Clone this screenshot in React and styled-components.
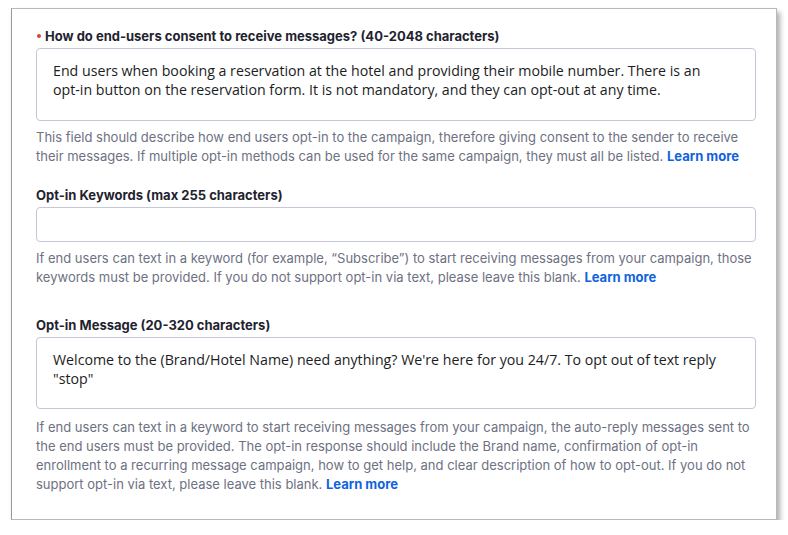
import styled, { createGlobalStyle } from "styled-components"

const Global = createGlobalStyle`
  body {
    margin: 0;
    background: #ffffff;
    font-family: Inter, "Liberation Sans", Arial, sans-serif;
  }
`

const Card = styled.div`
  box-sizing: border-box;
  margin: 8px 0 0 11px;
  width: 766px;
  padding: 18px 20px 25px 24px;
  background: #ffffff;
  border: 1px solid #b9b9b9;
  border-left-color: #9a9a9a;
  box-shadow: 3px 4px 5px rgba(0, 0, 0, 0.32);
`

const Field = styled.div`
  display: flex;
  flex-direction: column;
  margin-top: ${(p) => p.gap || 0}px;
`

const Label = styled.label`
  display: flex;
  align-items: center;
  font-size: 13px;
  line-height: 18px;
  font-weight: 700;
  color: #1f2330;
  margin-bottom: 3px;
`

const Required = styled.span`
  width: 4px;
  height: 4px;
  border-radius: 50%;
  background: #e0413b;
  margin: 0 4px 0 1px;
`

const Box = styled.textarea`
  box-sizing: border-box;
  width: 100%;
  height: ${(p) => p.h}px;
  margin: 0;
  padding: 12px 28px 12px 16px;
  border: 1px solid #c5c8d6;
  border-radius: 4px;
  resize: none;
  overflow: hidden;
  font-family: "Open Sans", "Noto Sans", sans-serif;
  font-size: 14.2px;
  line-height: 19px;
  color: #1b1d24;
  background: #fff;
  outline: none;
`

const Help = styled.p`
  margin: ${(p) => p.top || 7}px 0 0;
  font-size: 13px;
  line-height: 19px;
  color: #6d7182;
`

const Link = styled.a`
  color: #0f62e0;
  font-weight: 700;
  text-decoration: none;
`

export default function App() {
  return (
    <>
      <Global />
      <Card>
        <Field>
          <Label>
            <Required />
            How do end-users consent to receive messages? (40-2048 characters)
          </Label>
          <Box
            h={73}
            readOnly
            defaultValue="End users when booking a reservation at the hotel and providing their mobile number. There is an opt-in button on the reservation form. It is not mandatory, and they can opt-out at any time."
          />
          <Help>
            This field should describe how end users opt-in to the campaign, therefore giving consent to the sender to receive
            their messages. If multiple opt-in methods can be used for the same campaign, they must all be listed.{" "}
            <Link href="#">Learn more</Link>
          </Help>
        </Field>

        <Field gap={20}>
          <Label>Opt-in Keywords (max 255 characters)</Label>
          <Box h={35} readOnly defaultValue="" />
          <Help>
            If end users can text in a keyword (for example, “Subscribe”) to start receiving messages from your campaign, those
            keywords must be provided. If you do not support opt-in via text, please leave this blank.{" "}
            <Link href="#">Learn more</Link>
          </Help>
        </Field>

        <Field gap={29}>
          <Label>Opt-in Message (20-320 characters)</Label>
          <Box
            h={72}
            readOnly
            defaultValue={'Welcome to the (Brand/Hotel Name) need anything? We\'re here for you 24/7. To opt out of text reply "stop"'}
          />
          <Help top={9}>
            If end users can text in a keyword to start receiving messages from your campaign, the auto-reply messages sent to
            the end users must be provided. The opt-in response should include the Brand name, confirmation of opt-in
            enrollment to a recurring message campaign, how to get help, and clear description of how to opt-out. If you do not
            support opt-in via text, please leave this blank. <Link href="#">Learn more</Link>
          </Help>
        </Field>
      </Card>
    </>
  )
}
